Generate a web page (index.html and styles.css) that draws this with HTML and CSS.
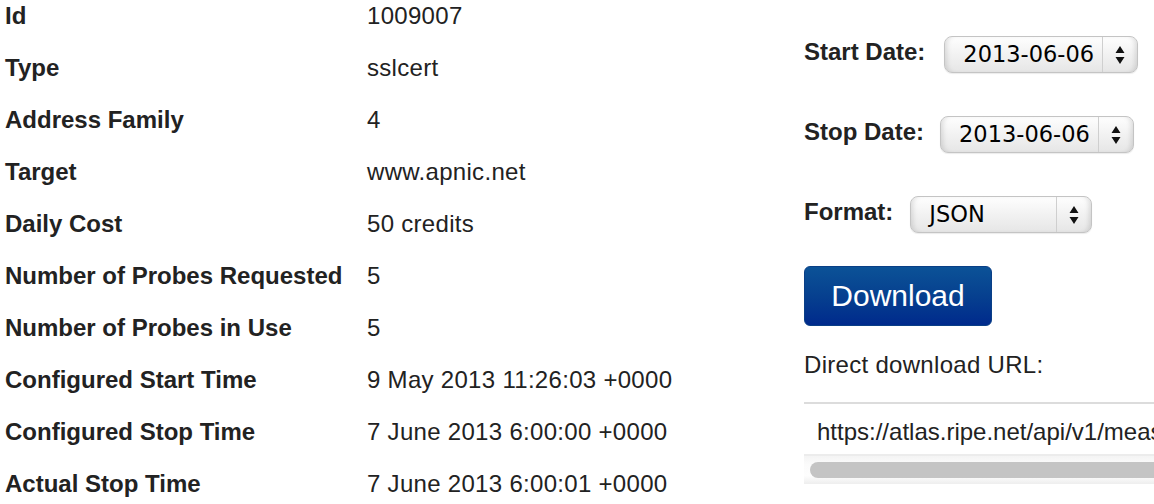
FILE: index.html
```html
<!DOCTYPE html>
<html>
<head>
<meta charset="utf-8">
<link rel="stylesheet" href="styles.css">
</head>
<body>
<div class="page">
  <div class="details">
    <div class="label">Id</div><div class="value">1009007</div>
    <div class="label">Type</div><div class="value">sslcert</div>
    <div class="label">Address Family</div><div class="value">4</div>
    <div class="label">Target</div><div class="value">www.apnic.net</div>
    <div class="label">Daily Cost</div><div class="value">50 credits</div>
    <div class="label">Number of Probes Requested</div><div class="value">5</div>
    <div class="label">Number of Probes in Use</div><div class="value">5</div>
    <div class="label">Configured Start Time</div><div class="value">9 May 2013 11:26:03 +0000</div>
    <div class="label">Configured Stop Time</div><div class="value">7 June 2013 6:00:00 +0000</div>
    <div class="label">Actual Stop Time</div><div class="value">7 June 2013 6:00:01 +0000</div>
  </div>
  <div class="download">
    <div class="field">
      <span class="flabel">Start Date:</span>
      <div class="select date sel-start">
        <span class="sval">2013-06-06</span>
        <span class="arrows"><svg width="10" height="18" viewBox="0 0 10 18"><path d="M5 0 L9.5 7 L0.5 7 Z M5 18 L9.5 11 L0.5 11 Z" fill="#111"/></svg></span>
      </div>
    </div>
    <div class="field">
      <span class="flabel">Stop Date:</span>
      <div class="select date sel-stop">
        <span class="sval">2013-06-06</span>
        <span class="arrows"><svg width="10" height="18" viewBox="0 0 10 18"><path d="M5 0 L9.5 7 L0.5 7 Z M5 18 L9.5 11 L0.5 11 Z" fill="#111"/></svg></span>
      </div>
    </div>
    <div class="field">
      <span class="flabel">Format:</span>
      <div class="select fmt sel-fmt">
        <span class="sval">JSON</span>
        <span class="arrows"><svg width="10" height="18" viewBox="0 0 10 18"><path d="M5 0 L9.5 7 L0.5 7 Z M5 18 L9.5 11 L0.5 11 Z" fill="#111"/></svg></span>
      </div>
    </div>
    <div class="button">Download</div>
    <div class="direct">Direct download URL:</div>
    <div class="urlbox">
      <div class="urltext">https://atlas.ripe.net/api/v1/measurement/1009007/result/?start=1370476800&amp;stop=1370563199&amp;format=json</div>
      <div class="scroll"><div class="thumb"></div></div>
    </div>
  </div>
</div>
</body>
</html>
```

FILE: styles.css
```css
html, body {
  margin: 0;
  padding: 0;
  background: #fff;
  overflow: hidden;
}
body {
  font-family: "Liberation Sans", Arial, sans-serif;
  font-size: 24px;
  color: #222;
}
.page {
  display: grid;
  grid-template-columns: 804px 1fr;
  width: 1154px;
  height: 504px;
  overflow: hidden;
}
.details {
  display: grid;
  grid-template-columns: 362px 1fr;
  padding-left: 5px;
  align-content: start;
}
.label, .value {
  line-height: 28px;
  padding-top: 2px;
  height: 50px;
  white-space: nowrap;
}
.label {
  font-weight: bold;
}
.value {
  letter-spacing: 0.3px;
}
.download {
  padding-top: 36px;
  display: flex;
  flex-direction: column;
  min-width: 0;
}
.field {
  display: flex;
  align-items: flex-start;
  height: 37px;
  margin-bottom: 43px;
}
.field:nth-child(3) {
  margin-bottom: 33px;
}
.flabel {
  font-weight: bold;
  line-height: 28px;
  padding-top: 2px;
  white-space: nowrap;
}
.select {
  box-sizing: border-box;
  height: 37px;
  border: 1px solid #c4c4c4;
  border-radius: 8px;
  background: linear-gradient(#fefefe 0%, #f3f3f3 45%, #e6e6e6 100%);
  box-shadow: inset 5px 0 5px -3px rgba(0,0,0,0.12), inset -5px 0 5px -3px rgba(0,0,0,0.12), 0 1px 1px rgba(0,0,0,0.08);
  display: flex;
  align-items: stretch;
  font-family: "DejaVu Sans", Verdana, sans-serif;
  font-size: 22.5px;
  color: #000;
}
.sel-start { margin-left: 19px; }
.sel-stop { margin-left: 16px; }
.sel-fmt { margin-left: 17px; }
.select.date { width: 194px; }
.select.fmt { width: 182px; }
.sval {
  flex: 1;
  line-height: 35px;
  padding-left: 18px;
  white-space: nowrap;
}
.arrows {
  width: 34px;
  border-left: 1px solid #cfcfcf;
  display: flex;
  align-items: center;
  justify-content: center;
}
.arrows svg {
  display: block;
  margin-top: 1px;
}
.button {
  box-sizing: border-box;
  width: 188px;
  height: 60px;
  border-radius: 6px;
  background: linear-gradient(#0b5297 0%, #06408f 50%, #002a8c 100%);
  border: 1px solid #0a3f86;
  color: #fff;
  font-size: 30px;
  line-height: 58px;
  text-align: center;
}
.direct {
  margin-top: 25px;
  line-height: 28px;
  white-space: nowrap;
  letter-spacing: 0.3px;
}
.urlbox {
  margin-top: 23px;
  border-top: 2px solid #dcdcdc;
  width: 420px;
}
.urltext {
  padding: 14px 0 0 13px;
  line-height: 28px;
  height: 36px;
  white-space: nowrap;
  overflow: hidden;
}
.scroll {
  border-top: 2px solid #ececec;
  height: 30px;
  background: linear-gradient(#f4f4f4 0%, #fbfbfb 30%, #fdfdfd 70%, #eeeeee 100%);
  padding: 6px 0 0 6px;
  box-sizing: border-box;
}
.thumb {
  height: 16px;
  border-radius: 8px;
  background: #c4c4c4;
}
```
